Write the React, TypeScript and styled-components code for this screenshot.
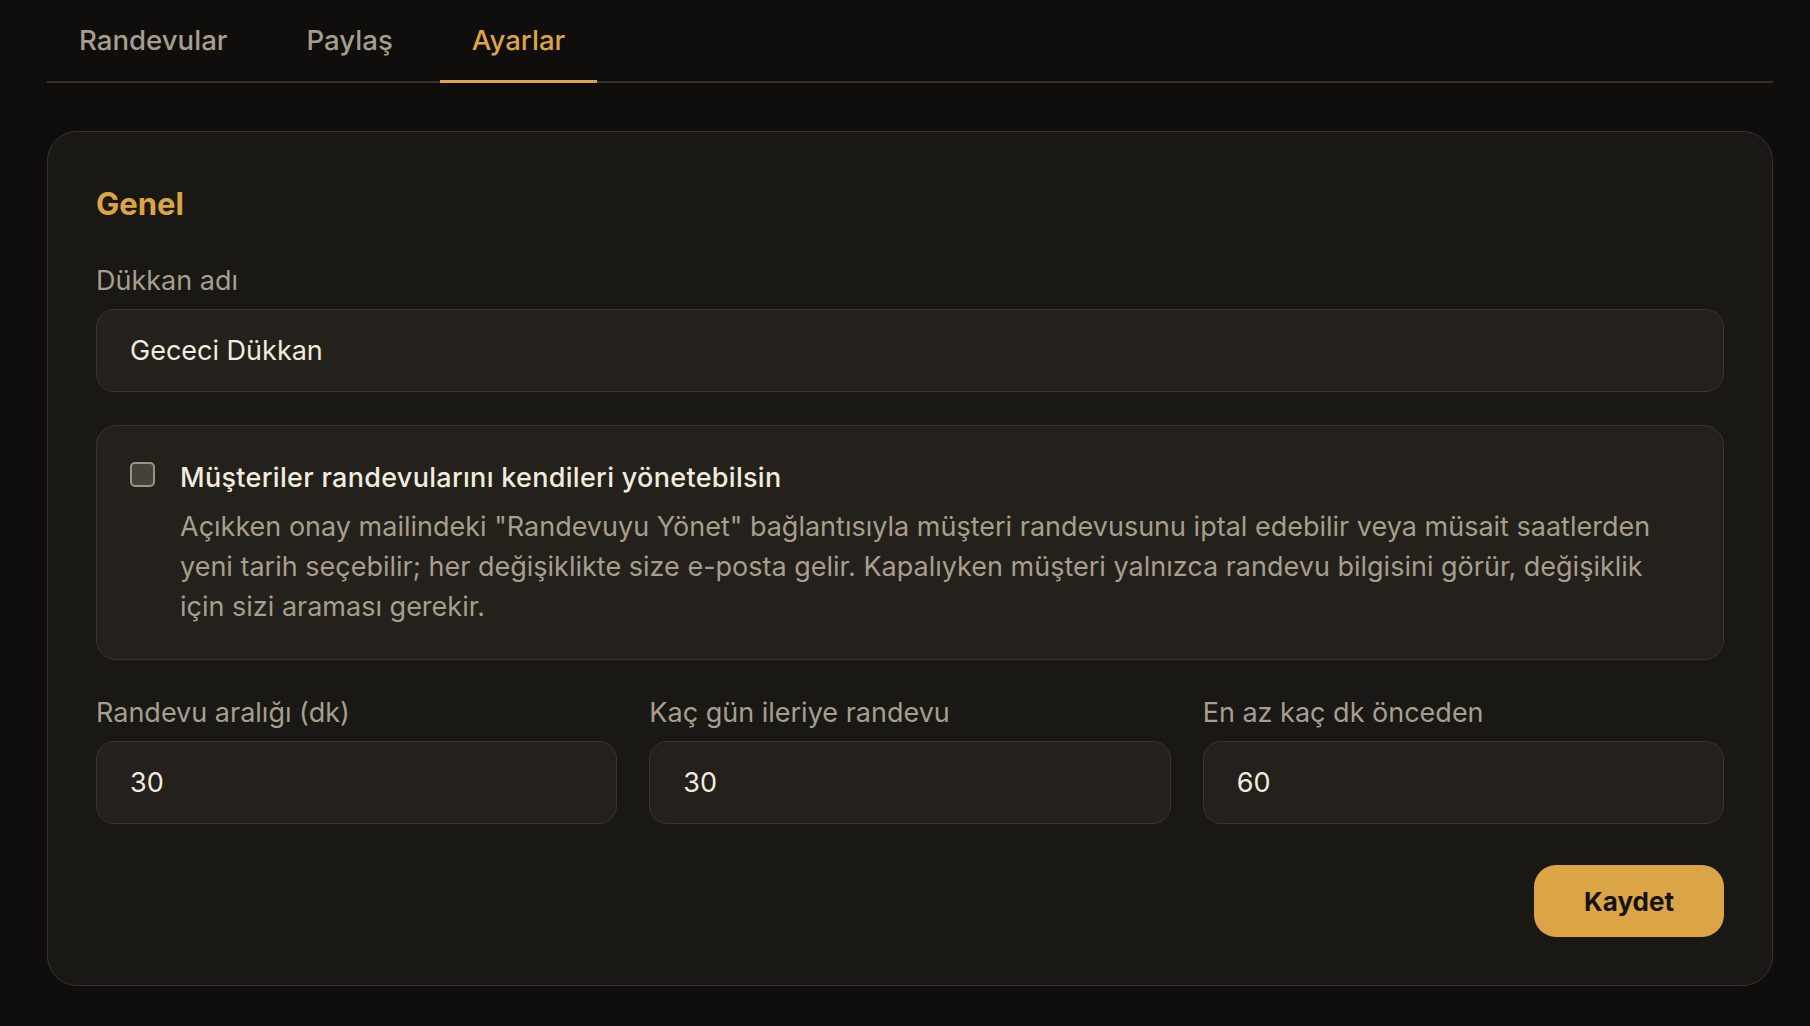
import React, { useState } from "react";
import styled, { createGlobalStyle } from "styled-components";

const GlobalStyle = createGlobalStyle`
  html, body {
    margin: 0;
    padding: 0;
    background: #0f0e0c;
  }
  body {
    font-family: Inter, "Noto Sans", "Liberation Sans", sans-serif;
    color: #f2ebdf;
  }
  * { box-sizing: border-box; }
`;

const Page = styled.div`
  padding: 0 37px 40px 47px;
  min-height: 1026px;
  background: #0f0e0c;
`;

const TabBar = styled.nav`
  display: flex;
  gap: 15px;
  border-bottom: 2px solid #37312a;
`;

const Tab = styled.button<{ $active?: boolean }>`
  appearance: none;
  background: none;
  border: none;
  border-bottom: 3px solid ${(p) => (p.$active ? "#dba546" : "transparent")};
  margin-bottom: -2px;
  padding: 20px 32px 20px;
  font-family: inherit;
  font-size: 27.6px;
  line-height: 40px;
  font-weight: 500;
  color: ${(p) => (p.$active ? "#dba546" : "#a69d8c")};
  cursor: pointer;
`;

const Card = styled.section`
  margin-top: 48px;
  background: #1a1815;
  border: 1px solid #38322b;
  border-radius: 30px;
  padding: 48px;
  display: flex;
  flex-direction: column;
`;

const SectionTitle = styled.h2`
  margin: 6px 0 39px;
  font-size: 31px;
  line-height: 36px;
  font-weight: 700;
  color: #dba546;
`;

const Fields = styled.div`
  display: flex;
  flex-direction: column;
  gap: 33px;
`;

const Field = styled.label`
  display: flex;
  flex-direction: column;
  gap: 8px;
  min-width: 0;
`;

const FieldLabel = styled.span`
  font-size: 27px;
  line-height: 40px;
  color: #a79e8e;
`;

const TextInput = styled.input`
  height: 83px;
  width: 100%;
  background: #24201b;
  border: 1px solid #3a342c;
  border-radius: 18px;
  padding: 0 33px;
  font-family: inherit;
  font-size: 27px;
  color: #f2ebdf;
  outline: none;
`;

const OptionBox = styled.div`
  display: grid;
  grid-template-columns: 25px 1fr;
  column-gap: 25px;
  background: #24201b;
  border: 1px solid #3a342c;
  border-radius: 20px;
  padding: 32px 32px 32px 33px;
`;

const CheckBox = styled.span<{ $checked: boolean }>`
  margin-top: 4px;
  width: 25px;
  height: 25px;
  border-radius: 5px;
  border: 2px solid #9d9483;
  background: ${(p) => (p.$checked ? "#dba546" : "#46423b")};
  cursor: pointer;
`;

const OptionText = styled.div`
  display: flex;
  flex-direction: column;
  gap: 9px;
`;

const OptionTitle = styled.span`
  font-size: 27px;
  line-height: 40px;
  font-weight: 500;
  letter-spacing: 0.3px;
  color: #f2ebdf;
`;

const OptionHint = styled.p`
  margin: 0;
  font-size: 27px;
  line-height: 40px;
  color: #a79e8e;
`;

const Row = styled.div`
  display: grid;
  grid-template-columns: repeat(3, 1fr);
  gap: 32px;
`;

const Actions = styled.div`
  display: flex;
  justify-content: flex-end;
  margin-top: 41px;
`;

const SaveButton = styled.button`
  height: 72px;
  padding: 0 50px;
  border: none;
  border-radius: 22px;
  background: #dba546;
  color: #15120e;
  font-family: inherit;
  font-size: 26px;
  font-weight: 700;
  cursor: pointer;
`;

export default function App() {
  const [tab, setTab] = useState("Ayarlar");
  const [selfManage, setSelfManage] = useState(false);
  const tabs = ["Randevular", "Paylaş", "Ayarlar"];

  return (
    <Page>
      <GlobalStyle />
      <TabBar>
        {tabs.map((t) => (
          <Tab key={t} $active={t === tab} onClick={() => setTab(t)}>
            {t}
          </Tab>
        ))}
      </TabBar>

      <Card>
        <SectionTitle>Genel</SectionTitle>
        <Fields>
          <Field>
            <FieldLabel>Dükkan adı</FieldLabel>
            <TextInput defaultValue="Gececi Dükkan" />
          </Field>

          <OptionBox>
            <CheckBox
              role="checkbox"
              aria-checked={selfManage}
              $checked={selfManage}
              onClick={() => setSelfManage((v) => !v)}
            />
            <OptionText>
              <OptionTitle>Müşteriler randevularını kendileri yönetebilsin</OptionTitle>
              <OptionHint>
                Açıkken onay mailindeki "Randevuyu Yönet" bağlantısıyla müşteri randevusunu iptal
                edebilir veya müsait saatlerden yeni tarih seçebilir; her değişiklikte size e-posta
                gelir. Kapalıyken müşteri yalnızca randevu bilgisini görür, değişiklik için sizi
                araması gerekir.
              </OptionHint>
            </OptionText>
          </OptionBox>

          <Row>
            <Field>
              <FieldLabel>Randevu aralığı (dk)</FieldLabel>
              <TextInput defaultValue="30" />
            </Field>
            <Field>
              <FieldLabel>Kaç gün ileriye randevu</FieldLabel>
              <TextInput defaultValue="30" />
            </Field>
            <Field>
              <FieldLabel>En az kaç dk önceden</FieldLabel>
              <TextInput defaultValue="60" />
            </Field>
          </Row>
        </Fields>

        <Actions>
          <SaveButton>Kaydet</SaveButton>
        </Actions>
      </Card>
    </Page>
  );
}
